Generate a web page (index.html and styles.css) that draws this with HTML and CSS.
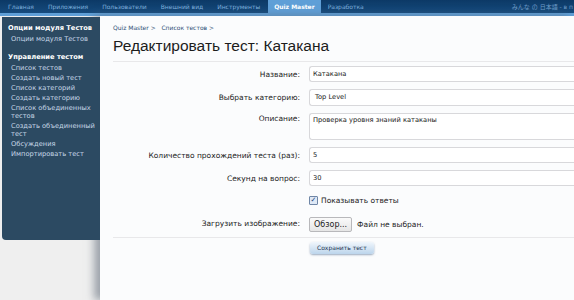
FILE: index.html
```html
<!DOCTYPE html>
<html lang="ru">
<head>
    <meta charset="UTF-8">
    <meta name="viewport" content="width=device-width, initial-scale=1.0">
    <title>Quiz Master</title>
    <link rel="stylesheet" href="styles.css">
</head>
<body>
    <div class="nav">
        <a class="tab">Главная</a>
        <a class="tab">Приложения</a>
        <a class="tab">Пользователи</a>
        <a class="tab">Внешний вид</a>
        <a class="tab">Инструменты</a>
        <a class="tab active">Quiz Master</a>
        <a class="tab">Разработка</a>
        <span class="site">みんな の 日本語 - в п</span>
    </div>
    <div class="page">
        <div class="sidebar">
            <p class="head">Опции модуля Тестов</p>
            <a class="item">Опции модуля Тестов</a>
            <p class="head second">Управление тестом</p>
            <a class="item">Список тестов</a>
            <a class="item">Создать новый тест</a>
            <a class="item">Список категорий</a>
            <a class="item">Создать категорию</a>
            <a class="item">Список объединенных тестов</a>
            <a class="item">Создать объединенный тест</a>
            <a class="item">Обсуждения</a>
            <a class="item">Импортировать тест</a>
        </div>
        <div class="content">
            <div class="crumbs">Quiz Master &gt; &nbsp; Список тестов &gt;</div>
            <h1 class="title">Редактировать тест: Катакана</h1>
            <div class="form">
                <label class="lbl">Название:</label>
                <div class="field"><input class="inp" type="text" value="Катакана"></div>

                <label class="lbl">Выбрать категорию:</label>
                <div class="field"><div class="select">Top Level</div></div>

                <label class="lbl top">Описание:</label>
                <div class="field"><div class="area">Проверка уровня знаний катаканы</div></div>

                <label class="lbl">Количество прохождений теста (раз):</label>
                <div class="field"><input class="inp" type="text" value="5"></div>

                <label class="lbl">Секунд на вопрос:</label>
                <div class="field"><input class="inp" type="text" value="30"></div>

                <span></span>
                <div class="field check"><span class="box">&#10003;</span> Показывать ответы</div>

                <label class="lbl">Загрузить изображение:</label>
                <div class="field file"><span class="browse">Обзор...</span> Файл не выбран.</div>
            </div>
            <div class="actions">
                <span class="save">Сохранить тест</span>
            </div>
        </div>
    </div>
</body>
</html>
```

FILE: styles.css
```css
html, body {
    margin: 0;
    padding: 0;
    height: 300px;
    overflow: hidden;
    background-color: #efefef;
    font-family: "DejaVu Sans", Verdana, sans-serif;
}

.nav {
    display: flex;
    align-items: stretch;
    height: 13px;
    background: linear-gradient(#0c3966, #164b7d);
    border-bottom: 3px solid #5f9fd7;
    padding-left: 8px;
    font-size: 6px;
    white-space: nowrap;
}

.nav .tab {
    color: #7fb0dd;
    line-height: 13px;
    margin-right: 14px;
}

.nav .tab.active {
    background-color: #5f9fd7;
    color: #fff;
    font-weight: bold;
    padding: 0 6px;
    margin-left: -6px;
    margin-right: 7px;
}

.nav .site {
    margin-left: auto;
    color: #6f9dc8;
    line-height: 13px;
    font-family: "DejaVu Sans", "Noto Sans CJK JP", sans-serif;
    padding-right: 1px;
}

.page {
    display: flex;
    height: 284px;
}

.sidebar {
    position: relative;
    z-index: 2;
    flex-shrink: 0;
    box-sizing: border-box;
    width: 98px;
    height: 223px;
    margin: 1px 0 0 2px;
    padding: 7px 0 0 5px;
    background-color: #2c4a62;
    border-bottom-left-radius: 4px;
    display: flex;
    flex-direction: column;
    font-size: 6.7px;
    line-height: 8px;
}

.sidebar .head {
    margin: 0 0 2px 0;
    color: #fff;
    font-weight: bold;
    padding-left: 1px;
}

.sidebar .head.second {
    margin-top: 9px;
}

.sidebar .item {
    color: #c5d6e6;
    padding: 1px 0 1px 4px;
}

.content {
    flex: 1;
    min-width: 0;
    background-color: #fbfcfd;
    box-shadow: -6px 0 8px rgba(90, 100, 115, 0.55);
    padding: 7px 0 0 13px;
}

.crumbs {
    color: #2c4e74;
    font-size: 6px;
    line-height: 10px;
}

.title {
    margin: 3px 0 0 0;
    font-family: "Liberation Sans", Arial, sans-serif;
    font-weight: normal;
    font-size: 15.5px;
    line-height: 20px;
    color: #1c1c1c;
    padding-bottom: 5px;
    border-bottom: 1px solid #e8e8ea;
}

.form {
    display: grid;
    grid-template-columns: 187px 1fr;
    column-gap: 9px;
    row-gap: 7px;
    padding-top: 4px;
    padding-bottom: 5px;
    border-bottom: 1px solid #e8e8ea;
    font-size: 7.5px;
    color: #222;
}

.lbl {
    text-align: right;
    align-self: center;
}

.lbl.top {
    align-self: start;
    padding-top: 1px;
}

.inp, .select, .area {
    box-sizing: border-box;
    width: 100%;
    height: 16px;
    border: 1px solid #d8d8db;
    border-right: none;
    border-radius: 3px 0 0 3px;
    background-color: #fff;
    font-family: "DejaVu Sans", Verdana, sans-serif;
    font-size: 6.7px;
    color: #222;
    padding: 0 3px;
    margin: 0;
    outline: none;
    display: block;
}

.select {
    height: 17px;
    line-height: 15px;
    padding-left: 5px;
}

.area {
    height: 27px;
    line-height: 9px;
    padding-top: 2px;
}

.check {
    display: flex;
    align-items: center;
    height: 14px;
    font-size: 7.5px;
}

.check .box {
    width: 7px;
    height: 7px;
    border: 1px solid #6f86a6;
    border-radius: 1px;
    background-color: #dfe9f6;
    color: #23477a;
    font-size: 7px;
    line-height: 7px;
    text-align: center;
    font-weight: bold;
    margin-right: 3px;
}

.file {
    display: flex;
    align-items: center;
    margin-top: 3px;
}

.file .browse {
    border: 1px solid #b8b8bb;
    border-radius: 2px;
    background: linear-gradient(#fafafa, #e6e6e6);
    font-size: 8px;
    padding: 2px 4px;
    margin-right: 5px;
}

.actions {
    display: flex;
    padding: 4px 0 0 197px;
}

.save {
    font-size: 6px;
    line-height: 7px;
    color: #1e3350;
    padding: 2px 7px 3px 7px;
    border-radius: 3px;
    background: linear-gradient(#f0f6fc, #bcd5ec);
    box-shadow: 0 1px 2px rgba(60, 90, 130, 0.5);
}
```
